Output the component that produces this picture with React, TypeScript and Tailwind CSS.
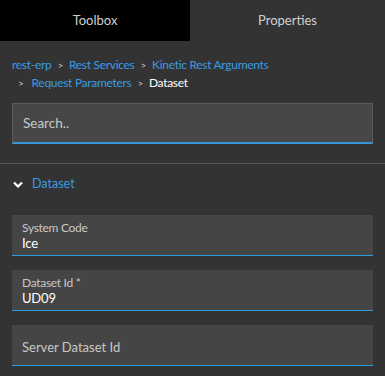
import React from "react";

const crumbs = ["rest-erp", "Rest Services", "Kinetic Rest Arguments", "Request Parameters"];

function Field({ label, value }: { label: string; value?: string }) {
  return (
    <div className="mx-3 h-[41px] bg-[#454545] border-b border-[#2d9be0] px-[10px] flex flex-col justify-center">
      {value !== undefined ? (
        <>
          <span className="text-[12px] leading-[15px] text-[#c8c8c8] tracking-[-0.3px] pt-[2px]">{label}</span>
          <span className="text-[13px] leading-[17px] text-white tracking-[-0.2px]">{value}</span>
        </>
      ) : (
        <span className="text-[13px] leading-[17px] text-[#c8c8c8] pt-[4px]">{label}</span>
      )}
    </div>
  );
}

export default function App() {
  return (
    <div
      className="w-[385px] h-[376px] bg-[#333333] overflow-hidden"
      style={{ fontFamily: "Lato, 'Noto Sans', sans-serif" }}
    >
      {/* tabs */}
      <div className="flex h-[41px] text-[13px] text-[#d0d0d0]">
        <div className="w-[190px] bg-black flex items-center justify-center">Toolbox</div>
        <div className="flex-1 flex items-center justify-center">Properties</div>
      </div>

      {/* breadcrumb */}
      <div className="px-3 pt-[15px] text-[12px] leading-[18px] tracking-[-0.3px]">
        <div className="flex items-center">
          <span className="text-[#3a9be4]">{crumbs[0]}</span>
          <span className="text-[#c8c8c8] text-[10px] mx-[6px]">&gt;</span>
          <span className="text-[#3a9be4]">{crumbs[1]}</span>
          <span className="text-[#c8c8c8] text-[10px] mx-[6px]">&gt;</span>
          <span className="text-[#3a9be4]">{crumbs[2]}</span>
        </div>
        <div className="flex items-center pl-[6px]">
          <span className="text-[#c8c8c8] text-[10px] mr-[8px]">&gt;</span>
          <span className="text-[#3a9be4]">{crumbs[3]}</span>
          <span className="text-[#c8c8c8] text-[10px] mx-[6px]">&gt;</span>
          <span className="text-white">Dataset</span>
        </div>
      </div>

      {/* search */}
      <div className="mx-3 mt-[11px] h-[41px] bg-[#474747] border border-[#5c5c5c] border-b-2 border-b-[#3496d6] flex items-center px-[10px]">
        <span className="text-[13.5px] text-[#c8c8c8]">Search..</span>
      </div>

      <div className="mt-[19px] border-t border-[#555555]" />

      {/* section */}
      <div className="flex items-center h-[40px] px-[13px] gap-[9px]">
        <svg width="10" height="7" viewBox="0 0 10 7">
          <path d="M1 1.5 L5 5.5 L9 1.5" fill="none" stroke="#ffffff" strokeWidth="2.2" />
        </svg>
        <span className="text-[12.5px] text-[#3a9be4]">Dataset</span>
      </div>

      <div className="mt-[11px] flex flex-col gap-[14px]">
        <Field label="System Code" value="Ice" />
        <Field label="Dataset Id *" value="UD09" />
        <Field label="Server Dataset Id" />
      </div>
    </div>
  );
}
